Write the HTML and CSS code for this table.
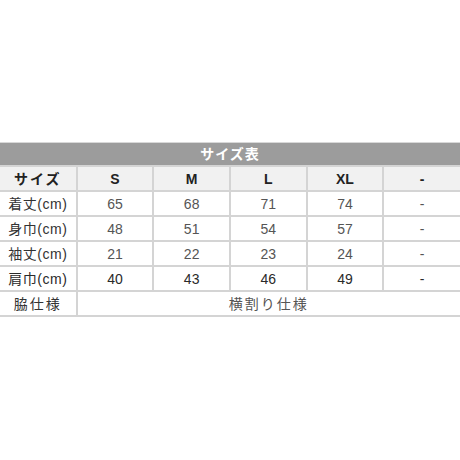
FILE: index.html
```html
<!DOCTYPE html>
<html>
<head>
<meta charset="utf-8">
<link rel="stylesheet" href="styles.css">
</head>
<body>
<div class="page">
<table class="size-table">
  <colgroup>
    <col><col><col><col><col><col>
  </colgroup>
  <tr class="title-row"><th colspan="6">サイズ表</th></tr>
  <tr class="head-row">
    <th class="label spaced">サイズ</th><th>S</th><th>M</th><th>L</th><th>XL</th><th>-</th>
  </tr>
  <tr>
    <td class="label">着丈(cm)</td><td>65</td><td>68</td><td>71</td><td>74</td><td>-</td>
  </tr>
  <tr>
    <td class="label">身巾(cm)</td><td>48</td><td>51</td><td>54</td><td>57</td><td>-</td>
  </tr>
  <tr>
    <td class="label">袖丈(cm)</td><td>21</td><td>22</td><td>23</td><td>24</td><td>-</td>
  </tr>
  <tr class="dark">
    <td class="label">肩巾(cm)</td><td>40</td><td>43</td><td>46</td><td>49</td><td>-</td>
  </tr>
  <tr>
    <td class="label spaced">脇仕様</td><td colspan="5" class="spaced">横割り仕様</td>
  </tr>
</table>
</div>
</body>
</html>
```
FILE: styles.css
```css
html, body {
  margin: 0;
  padding: 0;
  background: #fff;
}
.page {
  width: 460px;
  height: 460px;
  padding-top: 142px;
  box-sizing: border-box;
}
.size-table {
  width: 460px;
  table-layout: fixed;
  border-collapse: collapse;
  font-family: "Liberation Sans", Arial, "Noto Sans CJK JP", sans-serif;
  font-size: 14px;
  color: #555;
}
.size-table th,
.size-table td {
  border: 2px solid #d4d4d4;
  padding: 0;
  height: 23px;
  text-align: center;
  vertical-align: middle;
  line-height: 16px;
}
.size-table tr > :first-child {
  border-left: none;
}
.size-table tr > :last-child {
  border-right: none;
}
.title-row th {
  background: #9c9c9c;
  color: #fff;
  font-weight: bold;
  height: 22px;
  border-top: 1px solid #d8d8d8;
  letter-spacing: 1px;
}
.head-row th {
  background: #f1f1f1;
  color: #222;
  font-weight: bold;
}
.label {
  color: #333;
  letter-spacing: 0.5px;
}
.spaced {
  letter-spacing: 2px;
}
.dark td {
  color: #2a2a2a;
}
```
